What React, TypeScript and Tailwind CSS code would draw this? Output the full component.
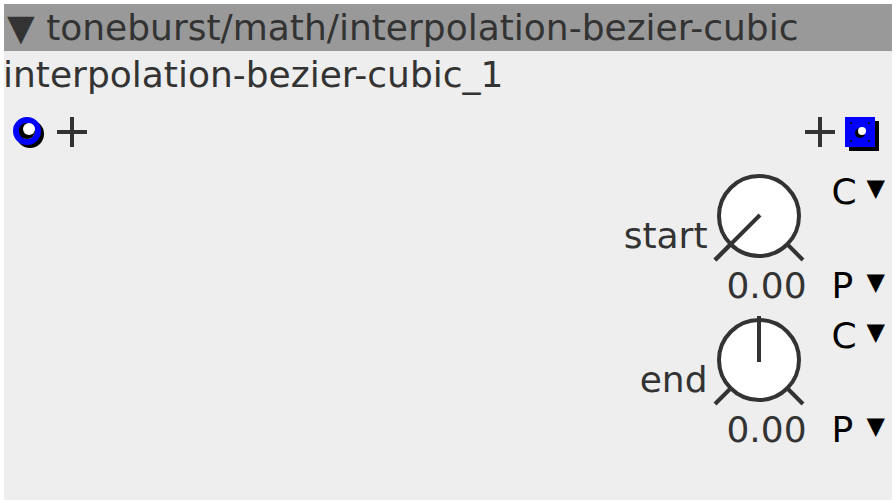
const font = { fontFamily: '"DejaVu Sans", "Liberation Sans", sans-serif' };

const InPort = () => (
    <svg width="40" height="40" viewBox="0 0 40 40">
        <circle cx="20" cy="23" r="11" fill="none" stroke="#000" strokeWidth="6" />
        <circle cx="17" cy="20" r="11" fill="none" stroke="#0000ff" strokeWidth="6" />
        <circle cx="17" cy="20" r="8" fill="#000" />
        <circle cx="19" cy="18" r="6" fill="#fff" />
    </svg>
);

const OutPort = () => (
    <svg width="36" height="40" viewBox="0 0 36 40">
        <rect x="4" y="10" width="30" height="30" fill="#000" />
        <rect x="0" y="6" width="30" height="30" fill="#0000ff" />
        <circle cx="15" cy="22" r="5" fill="#000" />
        <circle cx="17" cy="20" r="4" fill="#fff" />
        <circle cx="6" cy="12" r="1" fill="#000" />
        <circle cx="24" cy="12" r="1" fill="#000" />
        <circle cx="6" cy="30" r="1" fill="#000" />
        <circle cx="24" cy="30" r="1" fill="#000" />
    </svg>
);

const Plus = () => (
    <svg width="30" height="40" viewBox="0 0 30 40">
        <line x1="0" y1="21" x2="30" y2="21" stroke="#333" strokeWidth="4" />
        <line x1="15" y1="6" x2="15" y2="36" stroke="#333" strokeWidth="4" />
    </svg>
);

const Knob = ({ pointer }: { pointer: [number, number, number, number] }) => (
    <svg width="96" height="96" viewBox="0 0 96 96">
        <circle cx="48" cy="48" r="40" fill="#fff" stroke="#333" strokeWidth="4" />
        <line x1="20" y1="76" x2="4" y2="92" stroke="#333" strokeWidth="4" />
        <line x1="76" y1="76" x2="92" y2="92" stroke="#333" strokeWidth="4" />
        <line x1={pointer[0]} y1={pointer[1]} x2={pointer[2]} y2={pointer[3]} stroke="#333" strokeWidth="4" />
    </svg>
);

const Choice = ({ letter }: { letter: string }) => (
    <div className="flex items-start text-black">
        <span className="text-[36px] leading-[42px] w-[35px]">{letter}</span>
        <span className="text-[24px] leading-[28px] mt-[3px]">▼</span>
    </div>
);

const KnobRow = ({ label, pointer }: { label: string, pointer: [number, number, number, number] }) => (
    <div className="flex justify-end items-start pr-[7px]">
        <span className="text-[36px] leading-[42px] mt-[47px] mr-[3px] text-[#333]">{label}</span>
        <div className="flex flex-col w-[108px]">
            <Knob pointer={pointer} />
            <span className="text-[36px] leading-[42px] mt-[1px] pl-[4px] text-center text-[#333]">0.00</span>
        </div>
        <div className="flex flex-col ml-[13px] mt-[3px] gap-[52px]">
            <Choice letter="C" />
            <Choice letter="P" />
        </div>
    </div>
);

export default function App() {
    return (
        <div className="w-[896px] h-[504px] bg-white p-1" style={font}>
            <div className="w-[888px] h-[496px] bg-[#eeeeee] flex flex-col">
                {/* header */}
                <div className="h-[47px] bg-[#999999] flex items-center pl-[3px] text-[36px] leading-[42px] text-[#333]">
                    ▼ toneburst/math/interpolation-bezier-cubic
                </div>
                <div className="text-[36px] leading-[42px] text-[#333] -ml-[1px] mt-[3px]">interpolation-bezier-cubic_1</div>

                {/* ports */}
                <div className="flex justify-between items-center mt-[15px] h-[40px] pl-[6px] pr-[11px]">
                    <div className="flex items-center gap-[7px]">
                        <InPort />
                        <Plus />
                    </div>
                    <div className="flex items-center gap-[10px]">
                        <Plus />
                        <OutPort />
                    </div>
                </div>

                <div className="flex flex-col gap-[5px] mt-[17px]">
                    <KnobRow label="start" pointer={[49, 47, 4, 92]} />
                    <KnobRow label="end" pointer={[48, 50, 48, 4]} />
                </div>
            </div>
        </div>
    );
}
